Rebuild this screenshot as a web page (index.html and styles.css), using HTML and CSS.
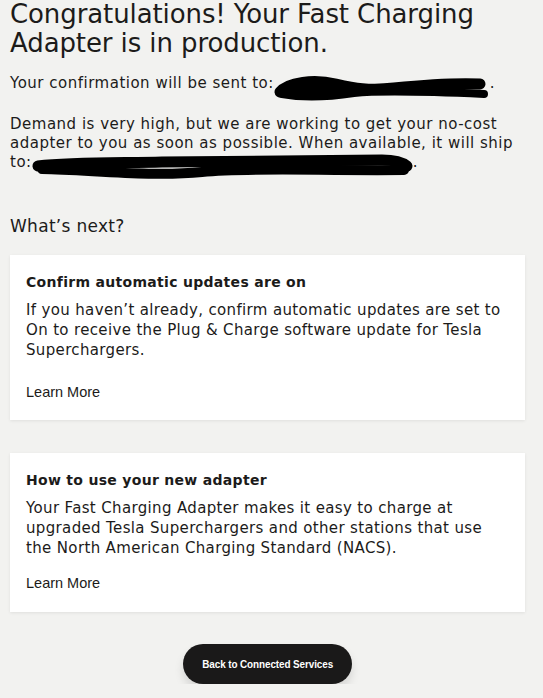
FILE: index.html
```html
<!DOCTYPE html>
<html lang="en">
<head>
<meta charset="utf-8">
<title>Fast Charging Adapter</title>
<link rel="stylesheet" href="styles.css">
</head>
<body>
<main class="page">
  <h1 class="title">Congratulations! Your Fast Charging Adapter is in production.</h1>
  <p class="text text-confirm">Your confirmation will be sent to:<svg class="redact redact-email" width="216" height="26" viewBox="0 0 216 26" aria-hidden="true"><path d="M6 16 C14 6 40 3 62 8 C80 12 95 15 120 12 C150 9 185 7 206 8" fill="none" stroke="#000" stroke-width="11" stroke-linecap="round"/><path d="M8 18 C30 22 60 20 80 17 C110 14 165 16 210 18" fill="none" stroke="#000" stroke-width="8" stroke-linecap="round"/><ellipse cx="40" cy="13" rx="36" ry="10" fill="#000"/></svg>.</p>
  <p class="text text-demand">Demand is very high, but we are working to get your no-cost adapter to you as soon as possible. When available, it will ship to:<svg class="redact redact-address" width="381" height="28" viewBox="0 0 381 28" aria-hidden="true"><path d="M6 13 C40 9 90 10 130 9 C180 8 260 8 350 7 C362 7 370 9 375 13" fill="none" stroke="#000" stroke-width="11" stroke-linecap="round"/><path d="M10 16 C60 17 120 24 170 19 C220 14 290 18 372 17" fill="none" stroke="#000" stroke-width="10" stroke-linecap="round"/></svg>.</p>

  <h2 class="next">What’s next?</h2>

  <section class="card">
    <h3 class="card-title">Confirm automatic updates are on</h3>
    <p class="card-text">If you haven’t already, confirm automatic updates are set to On to receive the Plug &amp; Charge software update for Tesla Superchargers.</p>
    <a class="learn learn-first" href="#">Learn More</a>
  </section>

  <section class="card card-second">
    <h3 class="card-title">How to use your new adapter</h3>
    <p class="card-text">Your Fast Charging Adapter makes it easy to charge at upgraded Tesla Superchargers and other stations that use the North American Charging Standard (NACS).</p>
    <a class="learn" href="#">Learn More</a>
  </section>

  <div class="actions">
    <a class="btn" href="#"><span class="btn-label">Back to Connected Services</span></a>
  </div>
</main>
</body>
</html>
```

FILE: styles.css
```css
html, body {
  margin: 0;
  padding: 0;
  background: #f2f2f0;
}
body {
  font-family: "DejaVu Sans", "Noto Sans", sans-serif;
  color: #1c1b1a;
}
.page {
  padding: 0 18px 0 10px;
  display: flex;
  flex-direction: column;
}
.title {
  margin: 0;
  font-size: 26px;
  line-height: 29px;
  font-weight: 400;
  letter-spacing: -0.1px;
}
.text {
  margin: 0;
  font-size: 15px;
  line-height: 19px;
  letter-spacing: 0.5px;
}
.text-confirm {
  margin-top: 16px;
}
.text-demand {
  margin-top: 20px;
}
.redact {
  vertical-align: -7px;
  margin-top: -7px;
  margin-bottom: -7px;
}
.next {
  margin: 41px 0 0;
  font-size: 17px;
  line-height: 22px;
  font-weight: 400;
  letter-spacing: 0.3px;
}
.card {
  margin-top: 18px;
  background: #fff;
  padding: 18px 16px 19px;
  display: flex;
  flex-direction: column;
  align-items: flex-start;
  box-shadow: 0 1px 3px rgba(0,0,0,0.08);
}
.card-second {
  margin-top: 33px;
  padding-bottom: 20px;
}
.card-title {
  margin: 0;
  font-size: 14px;
  line-height: 18px;
  font-weight: 700;
  letter-spacing: 0.3px;
}
.card-text {
  margin: 9px 0 0;
  font-size: 15px;
  line-height: 20px;
  letter-spacing: 0.35px;
}
.learn {
  margin-top: 16px;
  font-family: "Liberation Sans", Arial, sans-serif;
  font-size: 14.5px;
  line-height: 18px;
  color: #1c1b1a;
  text-decoration: none;
}
.learn-first {
  margin-top: 23px;
}
.actions {
  display: flex;
  justify-content: center;
  margin-top: 32px;
}
.btn {
  display: flex;
  align-items: center;
  justify-content: center;
  width: 169px;
  height: 40px;
  border-radius: 20px;
  background: #1a1919;
  color: #fff;
  font-family: "Liberation Sans", Arial, sans-serif;
  font-weight: 700;
  font-size: 11px;
  letter-spacing: -0.1px;
  text-decoration: none;
  box-shadow: 0 6px 10px rgba(0,0,0,0.12);
}
.btn-label {
  display: inline-block;
  white-space: nowrap;
  transform: scaleX(0.9);
}
```
